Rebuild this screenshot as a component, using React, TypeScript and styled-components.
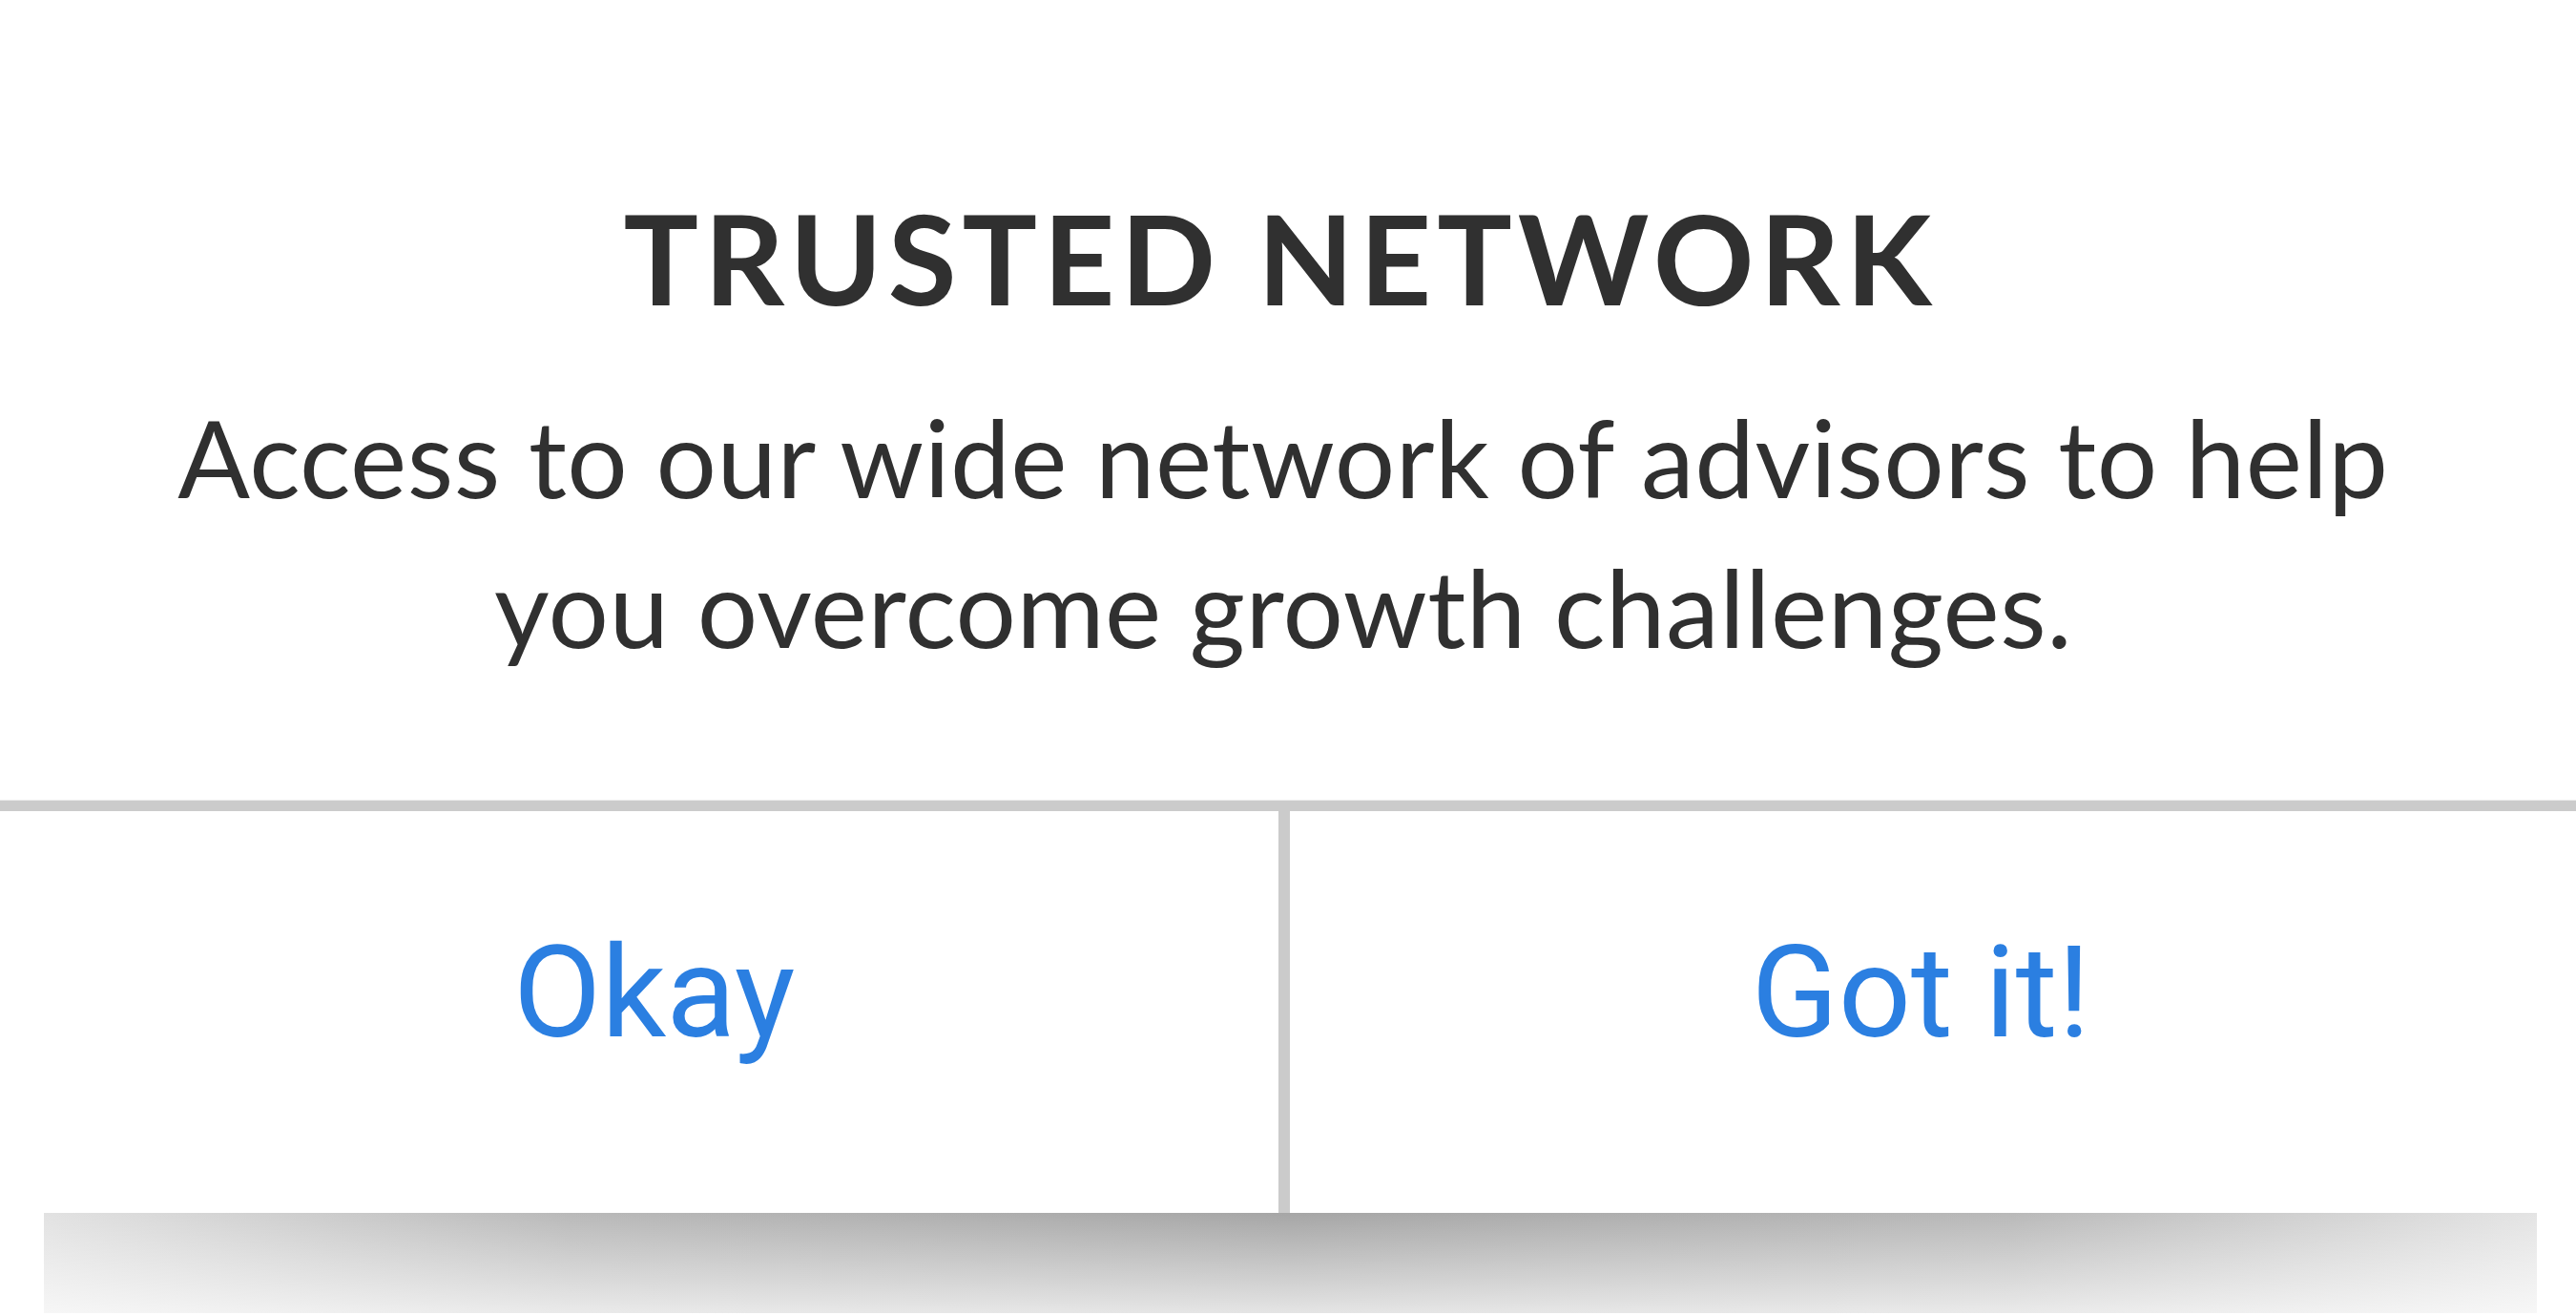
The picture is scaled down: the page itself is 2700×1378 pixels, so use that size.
import React from "react";
import styled, { createGlobalStyle } from "styled-components";

const GlobalStyle = createGlobalStyle`
  html, body {
    margin: 0;
    padding: 0;
    background: #ffffff;
  }
  body {
    overflow: hidden;
  }
`;

const Page = styled.div`
  width: 2700px;
  height: 1378px;
  overflow: hidden;
  background: #ffffff;
  display: flex;
  flex-direction: column;
`;

const Content = styled.div`
  padding: 204px 0 124px;
  display: flex;
  flex-direction: column;
  align-items: center;
  color: #303030;
  text-align: center;
`;

const Title = styled.h1`
  margin: 0 0 65px;
  padding-right: 16px;
  font-family: Lato, "Liberation Sans", sans-serif;
  font-weight: 700;
  font-size: 131px;
  line-height: 131px;
  letter-spacing: 6px;
`;

const Message = styled.p`
  margin: 0;
  padding-right: 10px;
  max-width: 2360px;
  font-family: Lato, "Liberation Sans", sans-serif;
  font-weight: 400;
  font-size: 112px;
  line-height: 157px;
  letter-spacing: 0.5px;
`;

const Divider = styled.div`
  height: 11px;
  background: #cbcbcb;
  border-top: 1px solid #ececec;
`;

const ButtonRow = styled.div`
  height: 421px;
  margin: 0 41px 0 32px;
  display: grid;
  grid-template-columns: 1fr 12px 1fr;
`;

const Separator = styled.div`
  background: #cbcbcb;
`;

const ActionButton = styled.button<{ $shift?: number }>`
  border: none;
  background: transparent;
  padding: 112px 0 0 ${(p) => p.$shift ?? 0}px;
  display: flex;
  justify-content: center;
  align-items: flex-start;
  font-family: Roboto, "Liberation Sans", sans-serif;
  font-weight: 400;
  font-size: 134px;
  line-height: normal;
  color: #2b7fe1;
  cursor: pointer;
`;

const Shadow = styled.div`
  height: 105px;
  margin: 0 41px 0 46px;
  background:
    linear-gradient(to bottom, rgba(255, 255, 255, 0) 0%, rgba(255, 255, 255, 0.7) 100%),
    linear-gradient(
      to right,
      #e2e2e2 0%,
      #b9b9b9 21%,
      #a6a6a6 50%,
      #b9b9b9 79%,
      #e4e4e4 100%
    );
`;

export default function App() {
  return (
    <>
      <GlobalStyle />
      <Page>
        <Content>
          <Title>TRUSTED NETWORK</Title>
          <Message>
            Access to our wide network of advisors to help you overcome growth
            challenges.
          </Message>
        </Content>
        <Divider />
        <ButtonRow>
          <ActionButton>Okay</ActionButton>
          <Separator />
          <ActionButton $shift={16}>Got it!</ActionButton>
        </ButtonRow>
        <Shadow />
      </Page>
    </>
  );
}
